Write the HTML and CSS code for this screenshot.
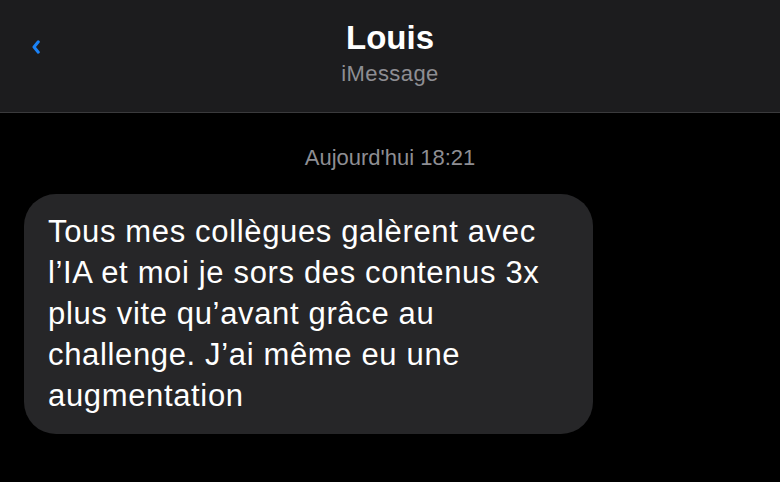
FILE: index.html
```html
<!DOCTYPE html>
<html lang="fr">
<head>
    <meta charset="UTF-8">
    <meta name="viewport" content="width=device-width, initial-scale=1.0">
    <title>Louis - iMessage</title>
    <link rel="stylesheet" href="styles.css">
</head>
<body>
    <div class="top-bar">
        <a class="back-btn" href="#">
            <svg width="8" height="14" viewBox="0 0 8 14"><path d="M6.3 1.8 L2 7 L6.3 12.2" fill="none" stroke="#1a82f7" stroke-width="3" stroke-linecap="round" stroke-linejoin="round"/></svg>
        </a>
        <div class="contact">
            <p class="contact-name">Louis</p>
            <p class="contact-service">iMessage</p>
        </div>
    </div>
    <div class="chat">
        <p class="timestamp">Aujourd'hui 18:21</p>
        <div class="bubble">
            Tous mes collègues galèrent avec l’IA et moi je sors des contenus 3x plus vite qu’avant grâce au challenge. J’ai même eu une augmentation
        </div>
    </div>
</body>
</html>
```
FILE: styles.css
```css
body {
    font-family: 'Liberation Sans', Arial, Helvetica, sans-serif;
    margin: 0;
    padding: 0;
    background-color: #000;
    color: #fff;
    height: 100vh;
    overflow: hidden;
}

.top-bar {
    background-color: #1c1c1e;
    border-bottom: 1px solid #3a3a3c;
    height: 112px;
    display: flex;
    align-items: flex-start;
    justify-content: center;
    position: relative;
}

.back-btn {
    position: absolute;
    left: 32px;
    top: 40px;
    display: block;
}

.contact {
    text-align: center;
    padding-top: 19px;
}

.contact-name {
    margin: 0;
    font-size: 33px;
    font-weight: bold;
    line-height: 38px;
}

.contact-service {
    margin: 2px 0 0;
    font-size: 22px;
    letter-spacing: 0.4px;
    color: #8e8e93;
    line-height: 30px;
}

.chat {
    padding: 32px 24px 0;
}

.timestamp {
    margin: 0 0 23px;
    text-align: center;
    color: #8e8e93;
    font-size: 22px;
    line-height: 26px;
}

.bubble {
    background-color: #262628;
    border-radius: 32px;
    width: 521px;
    padding: 17px 24px 18px;
    font-size: 31px;
    line-height: 41px;
    letter-spacing: 0.65px;
}
```
